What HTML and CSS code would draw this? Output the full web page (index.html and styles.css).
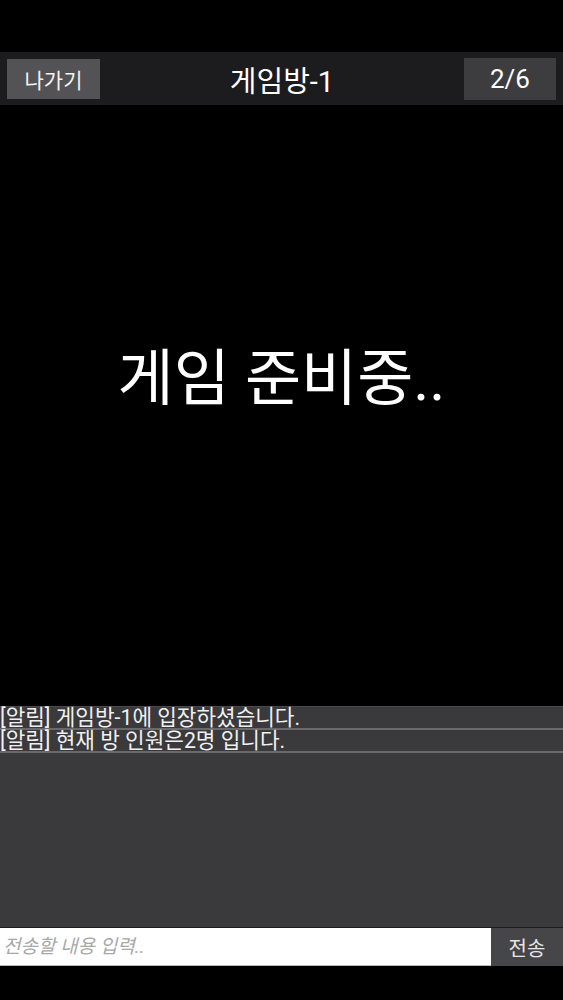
FILE: index.html
```html
<!DOCTYPE html>
<html lang="ko">
<head>
<meta charset="utf-8">
<title>게임방-1</title>
<link rel="stylesheet" href="styles.css">
</head>
<body>
<div class="app">
  <div class="status-space"></div>
  <header class="topbar">
    <button class="btn-exit">나가기</button>
    <div class="title">게임방-1</div>
    <div class="count">2/6</div>
  </header>
  <main class="stage">
    <div class="stage-text">게임 준비중..</div>
  </main>
  <section class="chat">
    <div class="msg">[알림] 게임방-1에 입장하셨습니다.</div>
    <div class="msg">[알림] 현재 방 인원은2명 입니다.</div>
  </section>
  <form class="send-row">
    <input class="send-input" type="text" placeholder="전송할 내용 입력..">
    <button class="send-btn" type="button">전송</button>
  </form>
  <div class="bottom-space"></div>
</div>
</body>
</html>
```
FILE: styles.css
```css
* { box-sizing: border-box; }
html, body { margin: 0; padding: 0; background: #000; }
body { font-family: Roboto, "Noto Sans CJK KR", sans-serif; color: #fff; }
.app { width: 563px; height: 1000px; display: flex; flex-direction: column; }
.status-space { height: 52px; background: #000; }
.topbar {
  height: 53px; background: #1c1b1e; display: flex; align-items: center;
  justify-content: space-between; padding: 0 7px;
}
.btn-exit {
  width: 93px; height: 40px; background: #535254; color: #f2f2f2;
  border: none; font-family: inherit; font-size: 21px; padding: 0;
}
.title { font-size: 29px; color: #fff; }
.count {
  width: 92px; height: 42px; background: #3d3c3f; color: #fff;
  font-size: 26px; display: flex; align-items: center; justify-content: center;
}
.stage { flex: 1; display: flex; align-items: center; justify-content: center; background: #000; }
.stage-text { font-size: 61px; color: #fff; margin-top: -64px; }
.chat { height: 221px; background: #3a393c; border-top: 1px solid #4a494c; }
.msg {
  font-size: 21.3px; line-height: 21px; color: #f0f0f0; padding-left: 0;
  border-bottom: 2px solid #6a696c; white-space: nowrap;
}
.send-row { display: flex; height: 39px; margin: 0; border-top: 1px solid #1c1b1e; }
.send-input {
  flex: 1; height: 38px; border: none; border-bottom: 1px solid #b8b8b8;
  background: #fff; font-family: inherit; font-size: 19px; padding: 0 3px; outline: none;
}
.send-input::placeholder { color: #a8a8a8; font-style: italic; }
.send-btn {
  width: 72px; height: 38px; background: #464548; color: #e6e6e6; border: none;
  font-family: inherit; font-size: 20px; padding: 0;
}
.bottom-space { flex: 0 0 34px; background: #000; }
```
